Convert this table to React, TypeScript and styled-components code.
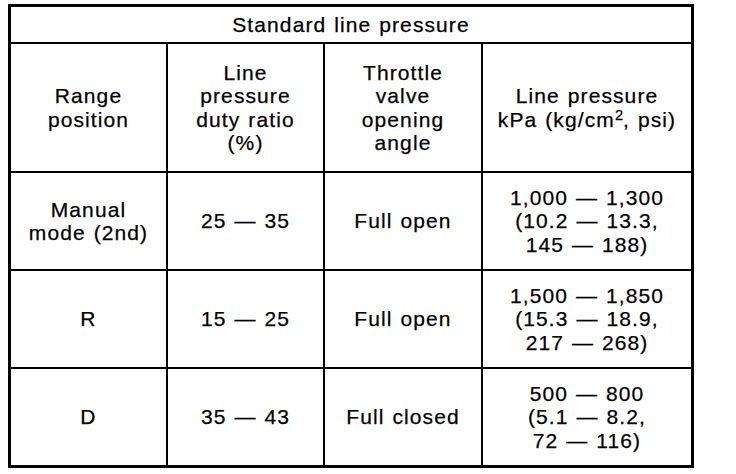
import React from 'react';
import styled, { createGlobalStyle } from 'styled-components';

const GlobalStyle = createGlobalStyle`
  html, body {
    margin: 0;
    padding: 0;
    background: #fff;
  }
`;

const Page = styled.div`
  padding: 4px 0 0 8px;
  font-family: 'Liberation Sans', Arial, Helvetica, sans-serif;
  color: #000;
`;

const Table = styled.table`
  width: 686px;
  table-layout: fixed;
  border: 3px solid #000;
  border-spacing: 0;
  font-size: 21px;
  letter-spacing: 1.1px;
  word-spacing: 1px;
  line-height: 23.5px;
`;

const Row = styled.tr<{ $height: number }>`
  height: ${({ $height }) => $height}px;

  &:last-child > td {
    border-bottom: none;
  }
`;

const Cell = styled.td`
  padding: 0;
  text-align: center;
  vertical-align: middle;
  border-right: 2px solid #000;
  border-bottom: 2px solid #000;
  white-space: nowrap;
  -webkit-text-stroke: 0.25px #000;

  &:last-child {
    border-right: none;
  }
`;

const Sup = styled.sup`
  font-size: 0.7em;
  line-height: 0;
  letter-spacing: 0;
  vertical-align: 0.45em;
`;

const columns = [157, 157, 158, 208];

const rows = [
  {
    range: ['Manual', 'mode (2nd)'],
    duty: '25 — 35',
    throttle: 'Full open',
    pressure: ['1,000 — 1,300', '(10.2 — 13.3,', '145 — 188)'],
    height: 98,
  },
  {
    range: ['R'],
    duty: '15 — 25',
    throttle: 'Full open',
    pressure: ['1,500 — 1,850', '(15.3 — 18.9,', '217 — 268)'],
    height: 98,
  },
  {
    range: ['D'],
    duty: '35 — 43',
    throttle: 'Full closed',
    pressure: ['500 — 800', '(5.1 — 8.2,', '72 — 116)'],
    height: 96,
  },
];

const Lines: React.FC<{ lines: string[] }> = ({ lines }) => (
  <>
    {lines.map((line, i) => (
      <React.Fragment key={i}>
        {i > 0 && <br />}
        {line}
      </React.Fragment>
    ))}
  </>
);

const App: React.FC = () => {
  return (
    <Page>
      <GlobalStyle />
      <Table>
        <colgroup>
          {columns.map((w, i) => (
            <col key={i} style={{ width: w }} />
          ))}
        </colgroup>
        <tbody>
          <Row $height={37}>
            <Cell colSpan={4}>Standard line pressure</Cell>
          </Row>
          <Row $height={129}>
            <Cell>
              <Lines lines={['Range', 'position']} />
            </Cell>
            <Cell>
              <Lines lines={['Line', 'pressure', 'duty ratio', '(%)']} />
            </Cell>
            <Cell>
              <Lines lines={['Throttle', 'valve', 'opening', 'angle']} />
            </Cell>
            <Cell>
              Line pressure
              <br />
              kPa (kg/cm<Sup>2</Sup>, psi)
            </Cell>
          </Row>
          {rows.map((r, i) => (
            <Row key={i} $height={r.height}>
              <Cell>
                <Lines lines={r.range} />
              </Cell>
              <Cell>{r.duty}</Cell>
              <Cell>{r.throttle}</Cell>
              <Cell>
                <Lines lines={r.pressure} />
              </Cell>
            </Row>
          ))}
        </tbody>
      </Table>
    </Page>
  );
};

export default App;
